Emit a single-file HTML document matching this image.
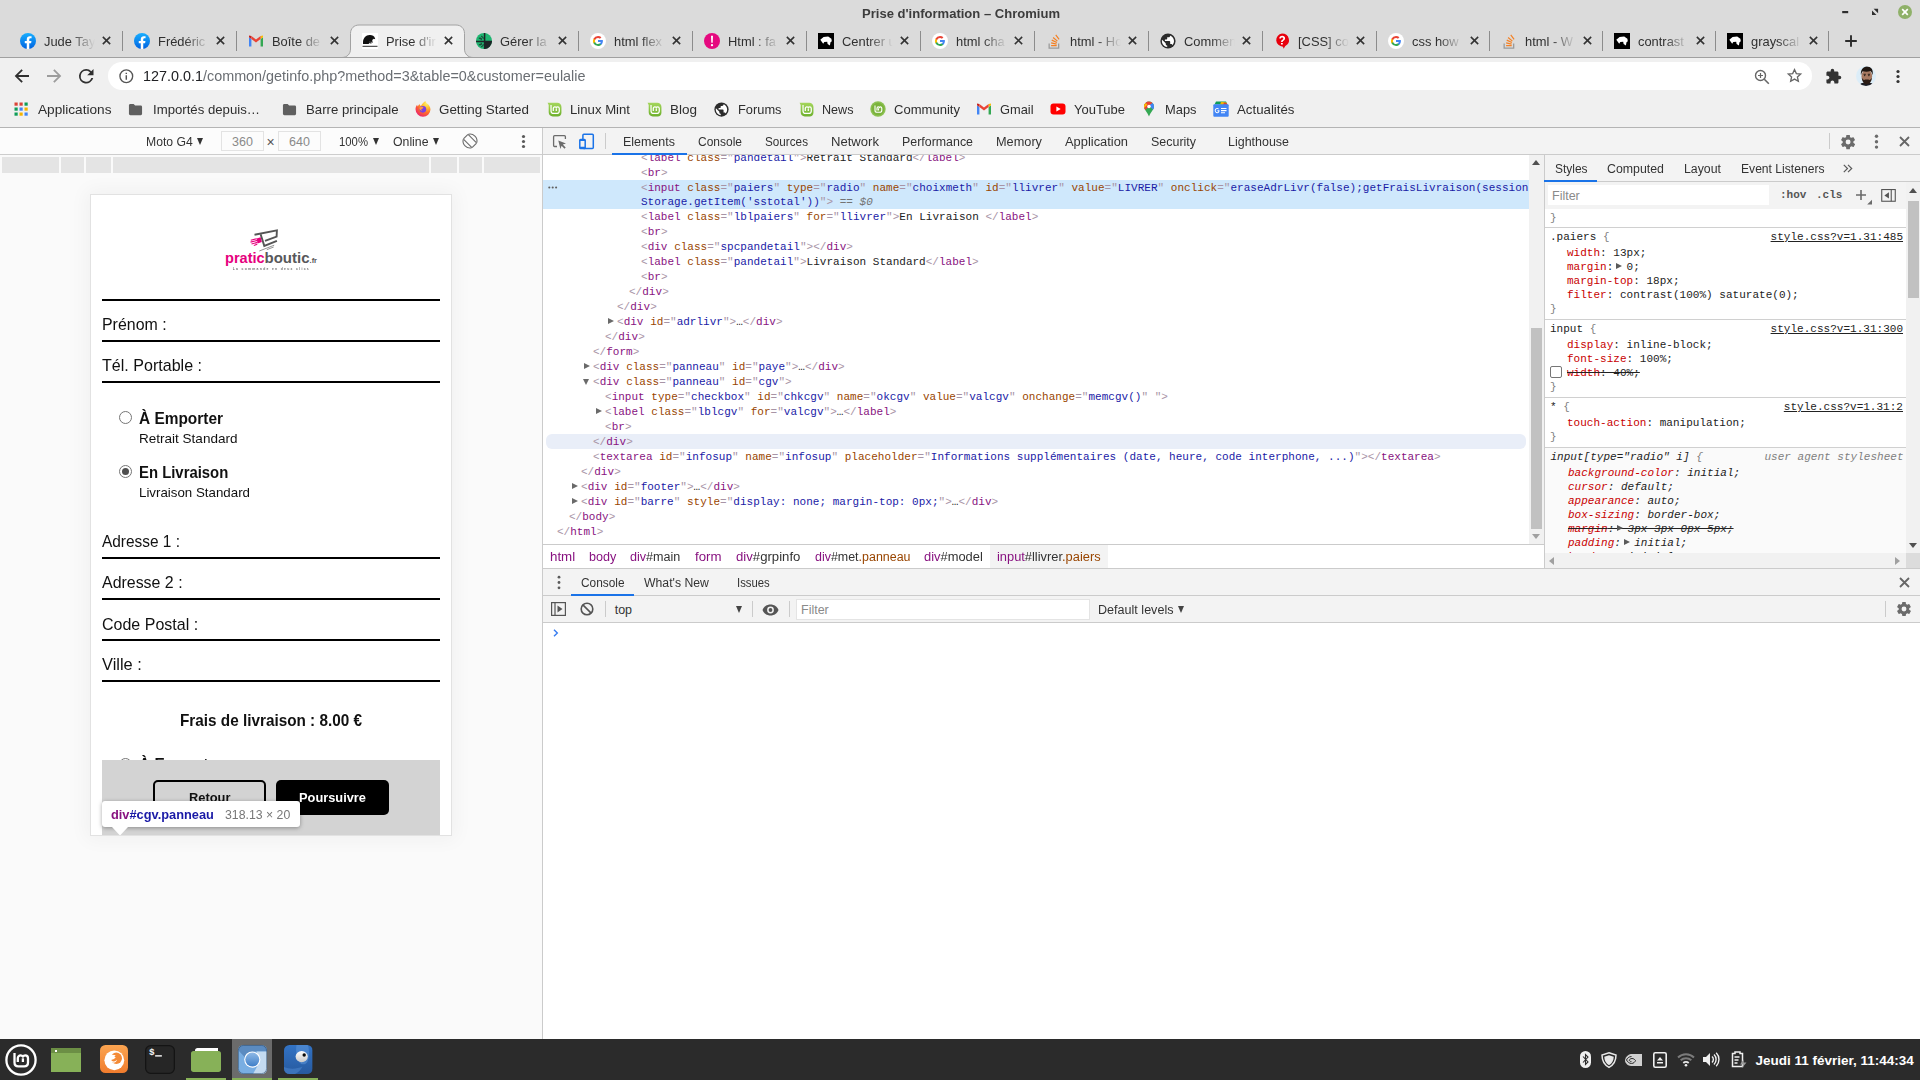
<!DOCTYPE html>
<html lang="fr">
<head>
<meta charset="utf-8">
<title>Prise d'information – Chromium</title>
<style>
*{box-sizing:border-box;margin:0;padding:0}
html,body{width:1920px;height:1080px;overflow:hidden;background:#fff}
body{font-family:"Liberation Sans",sans-serif;font-size:13px;color:#303030;position:relative}
.abs{position:absolute}
.t{position:absolute;white-space:nowrap;line-height:1}
svg{position:absolute;overflow:visible}
/* ---------- window chrome ---------- */
#titlebar{position:absolute;left:0;top:0;width:1920px;height:58px;background:#dbdbdb}
#title{position:absolute;white-space:nowrap;font-weight:bold;color:#3c3c3c;line-height:1}
#tabline{position:absolute;left:0;top:57px;width:1920px;height:1px;background:#a0a0a0}
#toolbar{position:absolute;left:0;top:58px;width:1920px;height:69px;background:#f0f0f0}
#chromeborder{position:absolute;left:0;top:127px;width:1920px;height:1px;background:#b4b4b4}
.tab{position:absolute;top:25px;height:33px;width:114px}
.tab .tt{position:absolute;left:36px;top:7px;height:20px;width:51px;overflow:hidden;-webkit-mask-image:linear-gradient(90deg,#000 52%,transparent 100%);mask-image:linear-gradient(90deg,#000 52%,transparent 100%)}
.tab .tti{position:absolute;left:0;top:2.900px;font-size:13.400px;line-height:1;color:#303030;white-space:nowrap;transform-origin:0 50%;transform:scaleX(.963)}
.tab .sep{position:absolute;left:113px;top:6px;width:1px;height:20px;background:#8c8c8c}
.tab .x{position:absolute;left:92.500px;top:10px;width:11px;height:11px}
.tab .fav{position:absolute;left:12px;top:8px;width:16px;height:16px}
#omni{position:absolute;left:108px;top:62px;width:1704px;height:28px;border-radius:14px;background:#fff}
.bm{position:absolute;line-height:1;color:#2e2e2e;white-space:nowrap}
/* ---------- taskbar ---------- */
#taskbar{position:absolute;left:0;top:1039px;width:1920px;height:41px;background:#2b2b2b}
</style>
</head>
<body>
<!-- ======= TITLE BAR + TABS ======= -->
<div id="titlebar">
  <div id="title" style="transform-origin:0 50%;transform:scaleX(1.0030);left:861.500px;top:6.500px;font-size:13px">Prise d'information – Chromium</div>
  <div id="tabstrip">
<svg width="0" height="0" style="position:absolute"><defs><linearGradient id="fbg" x1="0" y1="0" x2="0" y2="1"><stop offset="0" stop-color="#19afff"/><stop offset="1" stop-color="#0062e0"/></linearGradient></defs></svg>
<div class="tab" style="left:8px"><svg class="fav" viewBox="0 0 16 16"><circle cx="8" cy="8" r="8" fill="url(#fbg)"/><path d="M11.1 10.3l.35-2.3H9.25V6.5c0-.63.3-1.25 1.3-1.25h1V3.3s-.9-.16-1.78-.16c-1.8 0-3 1.1-3 3.1V8h-2v2.3h2V16h2.48v-5.7z" fill="#fff"/></svg><span class="tt"><span class="tti">Jude Tay</span></span><svg class="x" viewBox="0 0 12 12"><path d="M2 2l8 8M10 2l-8 8" stroke="#333" stroke-width="1.700" fill="none"/></svg><span class="sep" style="left:114px"></span></div>
<div class="tab" style="left:122px"><svg class="fav" viewBox="0 0 16 16"><circle cx="8" cy="8" r="8" fill="url(#fbg)"/><path d="M11.1 10.3l.35-2.3H9.25V6.5c0-.63.3-1.25 1.3-1.25h1V3.3s-.9-.16-1.78-.16c-1.8 0-3 1.1-3 3.1V8h-2v2.3h2V16h2.48v-5.7z" fill="#fff"/></svg><span class="tt"><span class="tti">Frédéric</span></span><svg class="x" viewBox="0 0 12 12"><path d="M2 2l8 8M10 2l-8 8" stroke="#333" stroke-width="1.700" fill="none"/></svg><span class="sep" style="left:114px"></span></div>
<div class="tab" style="left:236px"><svg class="fav" viewBox="0 0 16 16"><path d="M1 13.5V4.2l2.4 1.8v7.5z" fill="#4285f4"/><path d="M12.6 13.5V6l2.4-1.8v9.3z" fill="#34a853"/><path d="M12.6 3.1l2.4-.6v1.7L12.6 6z" fill="#fbbc04"/><path d="M1 2.5l2.4.6V6L1 4.2z" fill="#c5221f"/><path d="M3.4 6V3.1L8 6.6l4.6-3.5V6L8 9.5z" fill="#ea4335"/></svg><span class="tt"><span class="tti">Boîte de</span></span><svg class="x" viewBox="0 0 12 12"><path d="M2 2l8 8M10 2l-8 8" stroke="#333" stroke-width="1.700" fill="none"/></svg></div>
<svg class="acttab" style="left:341px;top:24px" width="132" height="34" viewBox="0 0 132 34"><path d="M1 33.500 C6 33.500 9.500 30 9.500 25 V9.500 C9.500 4.500 13 1 18 1 H115 C120 1 123.5 4.500 123.5 9.500 V25 C123.5 30 127 33.500 132 33.500 V34 H0Z" fill="#f0f0f0" stroke="#a2a2a2" stroke-width="1"/><rect x="0" y="33" width="132" height="2" fill="#f0f0f0"/></svg>
<div class="tab" style="left:350px"><svg class="fav" viewBox="0 0 16 16"><rect width="16" height="16" fill="#fff"/><path d="M1 9.600C1 5 4 2.300 7.500 2.100c2.500-.2 4.800 1.100 5.500 3.100l.2 1-1.400-.5-1.600 1.200.5 3-1.500-1-.6 1.500-1-.3L6.500 11 1 11z" fill="#111"/><path d="M.5 13.300h15" stroke="#111" stroke-width=".9"/><path d="M7.600 8.400l1 2.200M9 8.300l.5 2.200" stroke="#666" stroke-width=".7"/></svg><span class="tt"><span class="tti">Prise d'ir</span></span><svg class="x" viewBox="0 0 12 12"><path d="M2 2l8 8M10 2l-8 8" stroke="#333" stroke-width="1.700" fill="none"/></svg></div>
<div class="tab" style="left:464px"><svg class="fav" viewBox="0 0 16 16"><circle cx="8" cy="8" r="8" fill="#1fb571"/><path d="M8.600 8.600H16A8 8 0 0 1 8.600 16z" fill="#1d2526"/><path d="M8.600 0v16M0 8.600h16" stroke="#1d2526" stroke-width="1.500" fill="none"/><path d="M2.800 5.200h2.400v2M2.800 11.800h2.400v-2M5.200 3.200c1.500.3 2 1.300 2 2.500M5.200 13.800c1.500-.3 2-1.300 2-2.500" stroke="#1d2526" stroke-width="1" fill="none"/></svg><span class="tt"><span class="tti">Gérer la</span></span><svg class="x" viewBox="0 0 12 12"><path d="M2 2l8 8M10 2l-8 8" stroke="#333" stroke-width="1.700" fill="none"/></svg><span class="sep" style="left:114px"></span></div>
<div class="tab" style="left:578px"><svg class="fav" viewBox="0 0 16 16"><circle cx="8" cy="8" r="8" fill="#fff"/><path d="M12.9 8.1c0-.36-.03-.7-.1-1.03H8v1.95h2.75a2.35 2.35 0 0 1-1.02 1.54v1.28h1.65c.97-.9 1.52-2.2 1.52-3.74z" fill="#4285f4"/><path d="M8 13.1c1.38 0 2.54-.46 3.38-1.24l-1.65-1.28c-.46.3-1.04.49-1.73.49-1.33 0-2.46-.9-2.86-2.1h-1.7v1.32A5.1 5.1 0 0 0 8 13.1z" fill="#34a853"/><path d="M5.14 8.97a3.06 3.06 0 0 1 0-1.95V5.7h-1.7a5.1 5.1 0 0 0 0 4.59z" fill="#fbbc05"/><path d="M8 4.93c.75 0 1.42.26 1.95.76l1.46-1.46A4.9 4.9 0 0 0 8 2.9 5.1 5.1 0 0 0 3.44 5.7l1.7 1.32c.4-1.2 1.53-2.1 2.86-2.1z" fill="#ea4335"/></svg><span class="tt"><span class="tti">html flex</span></span><svg class="x" viewBox="0 0 12 12"><path d="M2 2l8 8M10 2l-8 8" stroke="#333" stroke-width="1.700" fill="none"/></svg><span class="sep" style="left:114px"></span></div>
<div class="tab" style="left:692px"><svg class="fav" viewBox="0 0 16 16"><circle cx="8" cy="8" r="8" fill="#e5097f"/><path d="M7 2.800h2l-.3 7H7.300zM8 11a1.150 1.150 0 1 1 0 2.300A1.150 1.150 0 0 1 8 11z" fill="#fff"/></svg><span class="tt"><span class="tti">Html : fa</span></span><svg class="x" viewBox="0 0 12 12"><path d="M2 2l8 8M10 2l-8 8" stroke="#333" stroke-width="1.700" fill="none"/></svg><span class="sep" style="left:114px"></span></div>
<div class="tab" style="left:806px"><svg class="fav" viewBox="0 0 16 16"><rect width="16" height="16" fill="#000"/><path d="M2.300 6.800L5.600 4l4.600-.6 3.200 2.400.4 2.500-1.300 1-.6 3.200-2.300-1.600-.4-2.200-2.900.3-1.100 1.700z" fill="#fff"/></svg><span class="tt"><span class="tti">Centrer u</span></span><svg class="x" viewBox="0 0 12 12"><path d="M2 2l8 8M10 2l-8 8" stroke="#333" stroke-width="1.700" fill="none"/></svg><span class="sep" style="left:114px"></span></div>
<div class="tab" style="left:920px"><svg class="fav" viewBox="0 0 16 16"><circle cx="8" cy="8" r="8" fill="#fff"/><path d="M12.9 8.1c0-.36-.03-.7-.1-1.03H8v1.95h2.75a2.35 2.35 0 0 1-1.02 1.54v1.28h1.65c.97-.9 1.52-2.2 1.52-3.74z" fill="#4285f4"/><path d="M8 13.1c1.38 0 2.54-.46 3.38-1.24l-1.65-1.28c-.46.3-1.04.49-1.73.49-1.33 0-2.46-.9-2.86-2.1h-1.7v1.32A5.1 5.1 0 0 0 8 13.1z" fill="#34a853"/><path d="M5.14 8.97a3.06 3.06 0 0 1 0-1.95V5.7h-1.7a5.1 5.1 0 0 0 0 4.59z" fill="#fbbc05"/><path d="M8 4.93c.75 0 1.42.26 1.95.76l1.46-1.46A4.9 4.9 0 0 0 8 2.9 5.1 5.1 0 0 0 3.44 5.7l1.7 1.32c.4-1.2 1.53-2.1 2.86-2.1z" fill="#ea4335"/></svg><span class="tt"><span class="tti">html cha</span></span><svg class="x" viewBox="0 0 12 12"><path d="M2 2l8 8M10 2l-8 8" stroke="#333" stroke-width="1.700" fill="none"/></svg><span class="sep" style="left:114px"></span></div>
<div class="tab" style="left:1034px"><svg class="fav" viewBox="0 0 16 16"><path d="M12 14.5V10.6h1.3v5.2H2.5v-5.2h1.3v3.9z" fill="#9b9b9b"/><path d="M5.1 12h5.6v1.2H5.1zM5.25 9.3l5.5 1.15-.25 1.2L5 10.5zM6 6.6l5.1 2.4-.5 1.1-5.1-2.4zM7.5 4.1l4.3 3.6-.8.9-4.3-3.6zM10.2 1.6l3.4 4.5-1 .7-3.3-4.5z" fill="#f48024"/></svg><span class="tt"><span class="tti">html - Ho</span></span><svg class="x" viewBox="0 0 12 12"><path d="M2 2l8 8M10 2l-8 8" stroke="#333" stroke-width="1.700" fill="none"/></svg><span class="sep" style="left:114px"></span></div>
<div class="tab" style="left:1148px"><svg class="fav" viewBox="0 0 16 16"><circle cx="8" cy="8" r="7.6" fill="#2b2b2b"/><path d="M7.2 14.1c-3-.4-5.3-2.9-5.3-6.100 0-.5.06-.9.16-1.3L5.700 10.300v.8c0 .8.7 1.500 1.500 1.500zm5.300-1.900c-.2-.6-.8-1.100-1.500-1.100h-.8V8.800c0-.4-.3-.8-.8-.8H4.900V6.500h1.500c.4 0 .8-.3.8-.8V4.200h1.500c.8 0 1.500-.7 1.500-1.500v-.3c2.200.9 3.800 3.100 3.800 5.600 0 1.600-.6 3.100-1.600 4.200z" fill="#fff"/></svg><span class="tt"><span class="tti">Commen</span></span><svg class="x" viewBox="0 0 12 12"><path d="M2 2l8 8M10 2l-8 8" stroke="#333" stroke-width="1.700" fill="none"/></svg><span class="sep" style="left:114px"></span></div>
<div class="tab" style="left:1262px"><svg class="fav" viewBox="0 0 16 16"><path d="M8 .6a7 6.600 0 0 1 3.300 12.400L9.600 15.800 9 13.700A7 6.600 0 0 1 8 .6z" fill="#e8000d"/><path d="M5.300 5.500c0-1.600 1.200-2.700 2.900-2.700s2.900 1 2.900 2.500c0 1.300-.8 1.900-1.600 2.400-.6.400-.8.700-.8 1.400H7.100c0-1.100.3-1.700 1.200-2.300.7-.5 1-.8 1-1.400 0-.6-.5-1-1.200-1s-1.200.500-1.200 1.100zM7 9.900h1.800v1.700H7z" fill="#fff"/></svg><span class="tt"><span class="tti">[CSS] cou</span></span><svg class="x" viewBox="0 0 12 12"><path d="M2 2l8 8M10 2l-8 8" stroke="#333" stroke-width="1.700" fill="none"/></svg><span class="sep" style="left:114px"></span></div>
<div class="tab" style="left:1376px"><svg class="fav" viewBox="0 0 16 16"><circle cx="8" cy="8" r="8" fill="#fff"/><path d="M12.9 8.1c0-.36-.03-.7-.1-1.03H8v1.95h2.75a2.35 2.35 0 0 1-1.02 1.54v1.28h1.65c.97-.9 1.52-2.2 1.52-3.74z" fill="#4285f4"/><path d="M8 13.1c1.38 0 2.54-.46 3.38-1.24l-1.65-1.28c-.46.3-1.04.49-1.73.49-1.33 0-2.46-.9-2.86-2.1h-1.7v1.32A5.1 5.1 0 0 0 8 13.1z" fill="#34a853"/><path d="M5.14 8.97a3.06 3.06 0 0 1 0-1.95V5.7h-1.7a5.1 5.1 0 0 0 0 4.59z" fill="#fbbc05"/><path d="M8 4.93c.75 0 1.42.26 1.95.76l1.46-1.46A4.9 4.9 0 0 0 8 2.9 5.1 5.1 0 0 0 3.44 5.7l1.7 1.32c.4-1.2 1.53-2.1 2.86-2.1z" fill="#ea4335"/></svg><span class="tt"><span class="tti">css how</span></span><svg class="x" viewBox="0 0 12 12"><path d="M2 2l8 8M10 2l-8 8" stroke="#333" stroke-width="1.700" fill="none"/></svg><span class="sep" style="left:113px"></span></div>
<div class="tab" style="left:1489px"><svg class="fav" viewBox="0 0 16 16"><path d="M12 14.5V10.6h1.3v5.2H2.5v-5.2h1.3v3.9z" fill="#9b9b9b"/><path d="M5.1 12h5.6v1.2H5.1zM5.25 9.3l5.5 1.15-.25 1.2L5 10.5zM6 6.6l5.1 2.4-.5 1.1-5.1-2.4zM7.5 4.1l4.3 3.6-.8.9-4.3-3.6zM10.2 1.6l3.4 4.5-1 .7-3.3-4.5z" fill="#f48024"/></svg><span class="tt"><span class="tti">html - W</span></span><svg class="x" viewBox="0 0 12 12"><path d="M2 2l8 8M10 2l-8 8" stroke="#333" stroke-width="1.700" fill="none"/></svg><span class="sep" style="left:113px"></span></div>
<div class="tab" style="left:1602px"><svg class="fav" viewBox="0 0 16 16"><rect width="16" height="16" fill="#000"/><path d="M2.300 6.800L5.600 4l4.600-.6 3.200 2.400.4 2.500-1.300 1-.6 3.200-2.300-1.600-.4-2.200-2.900.3-1.100 1.700z" fill="#fff"/></svg><span class="tt"><span class="tti">contrast</span></span><svg class="x" viewBox="0 0 12 12"><path d="M2 2l8 8M10 2l-8 8" stroke="#333" stroke-width="1.700" fill="none"/></svg><span class="sep" style="left:113px"></span></div>
<div class="tab" style="left:1715px"><svg class="fav" viewBox="0 0 16 16"><rect width="16" height="16" fill="#000"/><path d="M2.300 6.800L5.600 4l4.600-.6 3.200 2.400.4 2.500-1.300 1-.6 3.200-2.300-1.600-.4-2.200-2.900.3-1.100 1.700z" fill="#fff"/></svg><span class="tt"><span class="tti">grayscal</span></span><svg class="x" viewBox="0 0 12 12"><path d="M2 2l8 8M10 2l-8 8" stroke="#333" stroke-width="1.700" fill="none"/></svg><span class="sep" style="left:113px"></span></div>
<svg style="left:1844px;top:33.700px" width="14" height="14" viewBox="0 0 14 14"><path d="M7 1.200v11.600M1.200 7h11.600" stroke="#2b2b2b" stroke-width="1.900" fill="none"/></svg>
<svg style="left:1839px;top:5px" width="14" height="14" viewBox="0 0 14 14"><path d="M3.200 7.100h6" stroke="#2e2e2e" stroke-width="2.200"/></svg>
<svg style="left:1868px;top:5px" width="14" height="14" viewBox="0 0 14 14"><path d="M5.600 3.800h4.500v4.500zM4 5.400v4.500h4.500z" fill="#2e2e2e"/></svg>
<svg style="left:1897px;top:4px" width="16" height="16" viewBox="0 0 16 16"><circle cx="8" cy="8" r="7" fill="#8fb169"/><path d="M5.200 5.200l5.600 5.600M10.800 5.200l-5.600 5.600" stroke="#fff" stroke-width="1.700"/></svg>
</div>
  <div id="tabline"></div>
</div>
<!-- ======= TOOLBAR + BOOKMARKS ======= -->
<div id="toolbar"></div>
<div id="omni"></div>
<div id="tbitems">
<svg style="left:14px;top:68px" width="16" height="16" viewBox="0 0 16 16"><path d="M15 7.100H4.200l4.600-4.600L7.500 1.200.7 8l6.800 6.800 1.300-1.300-4.600-4.600H15z" fill="#2f2f2f"/></svg>
<svg style="left:46px;top:68px" width="16" height="16" viewBox="0 0 16 16"><path d="M1 7.100h10.800L7.200 2.500l1.300-1.300L15.300 8l-6.800 6.800-1.300-1.300 4.600-4.600H1z" fill="#9c9c9c"/></svg>
<svg style="left:79px;top:69px" width="14.500" height="14.500" viewBox="0 0 16 16"><path d="M13.600 2.400A7.900 7.900 0 0 0 8 0a8 8 0 1 0 7.700 10h-2.100A6 6 0 1 1 8 2c1.700 0 3.100.7 4.200 1.800L9 7h7V0z" fill="#2f2f2f"/></svg>
<svg style="left:118.700px;top:68.700px" width="14.600" height="14.600" viewBox="0 0 14 14"><circle cx="7" cy="7" r="6.100" fill="none" stroke="#555" stroke-width="1.300"/><path d="M6.300 6h1.400v4.300H6.300zM6.300 3.500h1.400v1.400H6.300z" fill="#555"/></svg>
<div class="t" id="url" style="transform-origin:0 50%;transform:scaleX(1.0136);left:143.0px;top:69px;font-size:14.2px;color:#202124">127.0.0.1<span style="color:#6a6e73">/common/getinfo.php?method=3&amp;table=0&amp;customer=eulalie</span></div>
<svg style="left:1754px;top:68.500px" width="16" height="16" viewBox="0 0 16 16"><circle cx="6.500" cy="6.500" r="5" fill="none" stroke="#666" stroke-width="1.400"/><path d="M10.300 10.300l4.500 4.500" stroke="#666" stroke-width="1.600"/><path d="M4 6.500h5M6.500 4v5" stroke="#666" stroke-width="1.200"/></svg>
<svg style="left:1786.500px;top:68.300px" width="15" height="15" viewBox="0 0 16 16"><path d="M8 1.600l1.950 4.300 4.650.5-3.500 3.150 1 4.600L8 11.800l-4.100 2.350 1-4.600L1.400 6.400l4.650-.5z" fill="none" stroke="#666" stroke-width="1.400" stroke-linejoin="miter"/></svg>
<svg style="left:1825px;top:68px" width="17" height="17" viewBox="0 0 24 24"><path d="M20.500 11H19V7c0-1.100-.9-2-2-2h-4V3.500a2.500 2.500 0 0 0-5 0V5H4c-1.100 0-2 .9-2 2v3.800h1.500c1.500 0 2.700 1.200 2.700 2.700S5 16.200 3.500 16.200H2V20c0 1.100.9 2 2 2h3.800v-1.500c0-1.500 1.200-2.700 2.700-2.700s2.700 1.200 2.700 2.700V22H17c1.100 0 2-.9 2-2v-4h1.500a2.500 2.500 0 0 0 0-5z" fill="#333"/></svg>
<svg style="left:1856px;top:66px" width="20" height="20" viewBox="0 0 20 20"><defs><clipPath id="avc"><circle cx="10" cy="10" r="10"/></clipPath></defs><g clip-path="url(#avc)"><rect width="20" height="20" fill="#dcedf8"/><path d="M3 20c.5-2.500 3-3.500 7.500-3.500s7 1 7.500 3.500z" fill="#1c1c22"/><ellipse cx="10.800" cy="10.200" rx="5.300" ry="6.800" fill="#a87a62"/><path d="M5 9.500C4.300 4 7 .3 11.300.5c4.200.2 6.200 3.500 5.300 9-.3-2.300-1-3.700-2.300-4.500-2 .8-5 .8-7.500.3C5.800 6.300 5.300 7.800 5 9.500z" fill="#1f1611"/><path d="M5.800 11.500c.3 4.500 2.300 6.700 5 6.700s4.700-2.200 5.100-6.700c-.8 1.800-1.500 2.300-2.600 2.500-.8-.6-4.200-.6-5 0-1.100-.3-1.800-.900-2.500-2.500z" fill="#2a1b14"/><path d="M7.600 8.300h2.200M11.800 8.300H14" stroke="#1f1611" stroke-width=".9"/><circle cx="8.700" cy="9.600" r=".7" fill="#1a1210"/><circle cx="12.900" cy="9.600" r=".7" fill="#1a1210"/></g></svg>
<svg style="left:1895px;top:68px" width="6" height="17" viewBox="0 0 6 17"><circle cx="3" cy="3.500" r="1.600" fill="#333"/><circle cx="3" cy="8.500" r="1.600" fill="#333"/><circle cx="3" cy="13.500" r="1.600" fill="#333"/></svg>
<svg style="left:14px;top:102px" width="14" height="14" viewBox="0 0 14 14"><rect x="0.5" y="0.5" width="3.200" height="3.200" fill="#db4437"/><rect x="5.5" y="0.5" width="3.200" height="3.200" fill="#db4437"/><rect x="10.5" y="0.5" width="3.200" height="3.200" fill="#0f9d58"/><rect x="0.5" y="5.5" width="3.200" height="3.200" fill="#0f9d58"/><rect x="5.5" y="5.5" width="3.200" height="3.200" fill="#4285f4"/><rect x="10.5" y="5.5" width="3.200" height="3.200" fill="#f4b400"/><rect x="0.5" y="10.5" width="3.200" height="3.200" fill="#0f9d58"/><rect x="5.5" y="10.5" width="3.200" height="3.200" fill="#f4b400"/><rect x="10.5" y="10.5" width="3.200" height="3.200" fill="#4285f4"/></svg>
<div class="bm" style="transform-origin:0 50%;transform:scaleX(1.0484);left:38.0px;top:103px;font-size:13px;">Applications</div>
<svg style="left:128px;top:102px" width="15" height="15" viewBox="0 0 16 14"><path d="M1 2.500C1 1.700 1.700 1 2.500 1H6l1.600 1.700h6c.8 0 1.400.7 1.400 1.500v7.300c0 .8-.6 1.500-1.400 1.500h-11C1.700 13 1 12.300 1 11.500z" fill="#5f5f5f"/></svg>
<div class="bm" style="transform-origin:0 50%;transform:scaleX(1.0142);left:152.5px;top:103px;font-size:13px;">Importés depuis…</div>
<svg style="left:282px;top:102px" width="15" height="15" viewBox="0 0 16 14"><path d="M1 2.500C1 1.700 1.700 1 2.500 1H6l1.600 1.700h6c.8 0 1.400.7 1.400 1.500v7.300c0 .8-.6 1.500-1.400 1.500h-11C1.700 13 1 12.300 1 11.500z" fill="#5f5f5f"/></svg>
<div class="bm" style="transform-origin:0 50%;transform:scaleX(1.0160);left:306.0px;top:103px;font-size:13px;">Barre principale</div>
<svg style="left:415px;top:100.5px" width="16" height="16" viewBox="0 0 16 16.500"><defs><radialGradient id="ffr" cx="0.75" cy="0.15" r="1"><stop offset="0" stop-color="#fff36b"/><stop offset=".3" stop-color="#ffbd2e"/><stop offset=".6" stop-color="#ff6a2b"/><stop offset="1" stop-color="#e6147a"/></radialGradient></defs><path d="M8.300 1.700C9.300.9 9.900.3 10.300 0c.5 1.300 1.300 2 2.200 2.800 1.700 1.400 3.200 3.300 3.200 6A7.700 7.700 0 0 1 8 16.300 7.700 7.700 0 0 1 .3 8.600C.3 6.500 1 5 1.900 3.900c.1.900.4 1.500.9 1.900.3-1.200 1-2 1.800-2.400.1.800.5 1.400 1.200 1.700.7-1.300 1.600-2.500 2.500-3.400z" fill="url(#ffr)"/><circle cx="7.900" cy="8.600" r="3.400" fill="#7a3fe0"/><path d="M5 6.400c.8-.6 1.900-.7 2.800-.2.600.3.700.9.300 1.300-.5.500-1.500.4-1.800 1.100-.2.600.4 1.100 1.200 1.300-1.700.4-3.200-.8-3.200-2.300 0-.5.300-.9.700-1.200z" fill="#ff9a3c"/></svg>
<div class="bm" style="transform-origin:0 50%;transform:scaleX(1.0291);left:439.0px;top:103px;font-size:13px;">Getting Started</div>
<svg style="left:546.5px;top:101.5px" width="15" height="15" viewBox="0 0 16 16"><defs><linearGradient id="mg" x1="0" y1="0" x2="0" y2="1"><stop offset="0" stop-color="#a5d65c"/><stop offset="1" stop-color="#6db02d"/></linearGradient></defs><path d="M.6.8h10.400c2.600 0 4.400 1.800 4.400 4.400v6.200c0 2.300-1.700 4-4 4H6.200c-2.600 0-4.400-1.800-4.400-4.400V3.200z" fill="url(#mg)"/><path d="M4.300 3.200v6.300c0 1.700 1 2.700 2.700 2.700h3.400c1.700 0 2.700-1 2.700-2.700V7c0-1.100-.7-1.900-1.700-1.900-.7 0-1.200.3-1.500.8-.3-.5-.8-.8-1.500-.8-1 0-1.700.8-1.700 1.900v2.700" fill="none" stroke="#fff" stroke-width="1.300"/><path d="M9.900 9.700V6.800" stroke="#fff" stroke-width="1.300"/></svg>
<div class="bm" style="transform-origin:0 50%;transform:scaleX(1.0127);left:570.0px;top:103px;font-size:13px;">Linux Mint</div>
<svg style="left:646.5px;top:101.5px" width="15" height="15" viewBox="0 0 16 16"><defs><linearGradient id="mg" x1="0" y1="0" x2="0" y2="1"><stop offset="0" stop-color="#a5d65c"/><stop offset="1" stop-color="#6db02d"/></linearGradient></defs><path d="M.6.8h10.400c2.600 0 4.400 1.800 4.400 4.400v6.200c0 2.300-1.700 4-4 4H6.200c-2.600 0-4.400-1.800-4.400-4.400V3.200z" fill="url(#mg)"/><path d="M4.300 3.200v6.300c0 1.700 1 2.700 2.700 2.700h3.400c1.700 0 2.700-1 2.700-2.700V7c0-1.100-.7-1.900-1.700-1.900-.7 0-1.200.3-1.500.8-.3-.5-.8-.8-1.500-.8-1 0-1.700.8-1.700 1.900v2.700" fill="none" stroke="#fff" stroke-width="1.300"/><path d="M9.900 9.700V6.800" stroke="#fff" stroke-width="1.300"/></svg>
<div class="bm" style="transform-origin:0 50%;transform:scaleX(1.0372);left:670.0px;top:103px;font-size:13px;">Blog</div>
<svg style="left:714px;top:102px" width="15" height="15" viewBox="0 0 16 16"><circle cx="8" cy="8" r="7.6" fill="#2b2b2b"/><path d="M7.2 14.1c-3-.4-5.3-2.9-5.3-6.100 0-.5.06-.9.16-1.3L5.700 10.300v.8c0 .8.7 1.500 1.500 1.500zm5.300-1.900c-.2-.6-.8-1.100-1.500-1.100h-.8V8.800c0-.4-.3-.8-.8-.8H4.900V6.500h1.500c.4 0 .8-.3.8-.8V4.200h1.500c.8 0 1.500-.7 1.500-1.500v-.3c2.200.9 3.800 3.100 3.800 5.600 0 1.600-.6 3.100-1.600 4.200z" fill="#fff"/></svg>
<div class="bm" style="transform-origin:0 50%;transform:scaleX(0.9872);left:738.0px;top:103px;font-size:13px;">Forums</div>
<svg style="left:798.5px;top:101.5px" width="15" height="15" viewBox="0 0 16 16"><defs><linearGradient id="mg" x1="0" y1="0" x2="0" y2="1"><stop offset="0" stop-color="#a5d65c"/><stop offset="1" stop-color="#6db02d"/></linearGradient></defs><path d="M.6.8h10.400c2.600 0 4.400 1.800 4.400 4.400v6.200c0 2.300-1.700 4-4 4H6.200c-2.600 0-4.400-1.800-4.400-4.400V3.200z" fill="url(#mg)"/><path d="M4.300 3.200v6.300c0 1.700 1 2.700 2.700 2.700h3.400c1.700 0 2.700-1 2.700-2.700V7c0-1.100-.7-1.900-1.700-1.900-.7 0-1.200.3-1.500.8-.3-.5-.8-.8-1.500-.8-1 0-1.700.8-1.700 1.900v2.700" fill="none" stroke="#fff" stroke-width="1.300"/><path d="M9.900 9.700V6.800" stroke="#fff" stroke-width="1.300"/></svg>
<div class="bm" style="transform-origin:0 50%;transform:scaleX(0.9688);left:822.0px;top:103px;font-size:13px;">News</div>
<svg style="left:870px;top:101px" width="16" height="16" viewBox="0 0 16 16"><circle cx="8" cy="8" r="7.700" fill="#8cc152"/><circle cx="8" cy="8" r="6.300" fill="#7bb33c"/><path d="M5 4.400v4.800c0 1.300.8 2.100 2.100 2.100h2.600c1.300 0 2.100-.8 2.100-2.100V7.400c0-.9-.5-1.500-1.300-1.500-.5 0-.9.200-1.100.6-.3-.4-.6-.6-1.100-.6-.8 0-1.300.6-1.300 1.500v2" fill="none" stroke="#fff" stroke-width="1.100"/><path d="M8.400 9.400V7.200" stroke="#fff" stroke-width="1.100"/></svg>
<div class="bm" style="transform-origin:0 50%;transform:scaleX(1.0038);left:894.0px;top:103px;font-size:13px;">Community</div>
<svg style="left:976px;top:101px" width="16" height="16" viewBox="0 0 16 16"><path d="M1 13.5V4.2l2.4 1.8v7.5z" fill="#4285f4"/><path d="M12.6 13.5V6l2.4-1.8v9.3z" fill="#34a853"/><path d="M12.6 3.1l2.4-.6v1.7L12.6 6z" fill="#fbbc04"/><path d="M1 2.5l2.4.6V6L1 4.2z" fill="#c5221f"/><path d="M3.4 6V3.1L8 6.6l4.6-3.5V6L8 9.5z" fill="#ea4335"/></svg>
<div class="bm" style="transform-origin:0 50%;transform:scaleX(0.9867);left:1000.0px;top:103px;font-size:13px;">Gmail</div>
<svg style="left:1050px;top:101px" width="16" height="16" viewBox="0 0 16 16"><rect x=".5" y="2.500" width="15" height="11" rx="3" fill="#f00"/><path d="M6.400 5.400l4.300 2.600-4.300 2.600z" fill="#fff"/></svg>
<div class="bm" style="transform-origin:0 50%;transform:scaleX(0.9982);left:1074.0px;top:103px;font-size:13px;">YouTube</div>
<svg style="left:1141px;top:101px" width="16" height="16" viewBox="0 0 16 16"><path d="M8 .5a5 5 0 0 1 5 5c0 3-3 5-5 10C6 10.500 3 8.500 3 5.500a5 5 0 0 1 5-5z" fill="#34a853"/><path d="M8 .5a5 5 0 0 1 3.600 1.500L4.200 9C3.500 8 3 6.800 3 5.500a5 5 0 0 1 5-5z" fill="#ea4335"/><path d="M11.600 2A5 5 0 0 1 13 5.500c0 1.200-.4 2.200-1 3.200L8 4.500z" fill="#4285f4"/><path d="M4.200 9l3.800-4.500 4 4.200c-1.200 2-3 3.800-4 6.800-1-3-2.700-4.600-3.800-6.500z" fill="#fbbc04" opacity=".0"/><path d="M4.500 2A5 5 0 0 0 3 5.500c0 .5.100 1 .2 1.500L6.500 3.500z" fill="#fbbc04"/><circle cx="8" cy="5.500" r="1.800" fill="#fff"/></svg>
<div class="bm" style="transform-origin:0 50%;transform:scaleX(0.9907);left:1165.0px;top:103px;font-size:13px;">Maps</div>
<svg style="left:1213px;top:101px" width="16" height="16" viewBox="0 0 16 16"><path d="M3 .5h10l1.500 3H1.500z" fill="#0f9d58"/><path d="M8 .8l5.300.6 1.200 2.600H7z" fill="#f4b400"/><path d="M11 1.600l2.800.6.900 2H10z" fill="#db4437"/><rect x=".3" y="3.300" width="15.400" height="12.400" rx="1" fill="#4285f4"/><path d="M6.300 9.200H4.400v1h1c-.1.600-.6 1-1.200 1-.8 0-1.500-.7-1.500-1.600s.7-1.600 1.500-1.600c.4 0 .7.100 1 .4l.7-.7c-.4-.4-1-.7-1.700-.7-1.400 0-2.500 1.100-2.500 2.600s1.100 2.600 2.500 2.600c1.400 0 2.300-1 2.300-2.400 0-.2 0-.4-.2-.6z" fill="#fff"/><path d="M8 7.500h5.500M8 9.600h5.500M8 11.700h4" stroke="#fff" stroke-width="1.100"/></svg>
<div class="bm" style="transform-origin:0 50%;transform:scaleX(1.0200);left:1237.0px;top:103px;font-size:13px;">Actualités</div>
</div>
<div id="chromeborder"></div>
<!-- ======= LEFT (DEVICE EMULATION) ======= -->
<div id="left">
<style>
#left{position:absolute;left:0;top:128px;width:542px;height:911px;background:#fafafa;overflow:hidden}
#devtb{position:absolute;left:0;top:0;width:542px;height:27px;background:#fcfcfc;border-bottom:1px solid #cdcdcd}
#devtb .t{font-size:12.5px;color:#333;top:8px}
#devtb .box{position:absolute;top:3px;height:20px;width:43px;border:1px solid #e3e3e3;background:#fcfcfc;color:#8a8a8a;font-size:12.500px;text-align:center;line-height:20px}
#mq{position:absolute;left:2px;top:29px;width:538px;height:16px;background:#e4e4e4}
#mq i{position:absolute;top:0;width:2px;height:16px;background:#fafafa}
#frame{position:absolute;left:90px;top:66px;width:362px;height:642px;border:1px solid #e2e2e2;background:#fff;box-shadow:0 0 18px 4px rgba(0,0,0,.04);overflow:hidden}
#pg{position:absolute;left:-91px;top:-195px;width:542px;height:911px;color:#111}
#pg .ln{position:absolute;left:102px;width:338px;height:2px;background:#000}
#pg .lb{position:absolute;left:102px;font-size:16.5px;line-height:20px;white-space:nowrap;color:#111}
#pg .big{position:absolute;left:138.500px;font-size:16.500px;font-weight:bold;line-height:20px;white-space:nowrap;color:#111}
#pg .sm{position:absolute;left:138.500px;font-size:13px;line-height:16px;white-space:nowrap;color:#111}
#pg .rad{position:absolute;left:119px;width:13px;height:13px;border-radius:50%;border:1px solid #767676;background:#fff}
#pg .rad.on::after{content:"";position:absolute;left:2px;top:2px;width:7px;height:7px;border-radius:50%;background:#4f4f4f}
#foot{position:absolute;left:102px;top:760px;width:338px;height:76px;background:#d3d3d3}
.btn{position:absolute;top:780px;height:35px;border-radius:5px;font-weight:bold;font-size:13.500px;text-align:center;line-height:35px}
#tip{position:absolute;left:102px;top:801px;width:198px;height:26px;background:#fff;border-radius:3px;box-shadow:0 1px 4px rgba(0,0,0,.35)}
</style>
<div id="devtb">
  <div class="t" style="transform-origin:0 50%;transform:scaleX(0.9742);left:145.500px">Moto G4</div>
  <div class="abs" style="left:196.8px;top:10px;width:0;height:0;border-top:7px solid #333;border-left:3.700px solid transparent;border-right:3.700px solid transparent"></div>
  <div class="box" style="left:221px">360</div>
  <div class="t" style="left:266.500px;top:7px;font-size:14px;color:#555">×</div>
  <div class="box" style="left:278px">640</div>
  <div class="t" style="transform-origin:0 50%;transform:scaleX(0.9067);left:338.500px">100%</div>
  <div class="abs" style="left:372.8px;top:10px;width:0;height:0;border-top:7px solid #333;border-left:3.700px solid transparent;border-right:3.700px solid transparent"></div>
  <div class="t" style="transform-origin:0 50%;transform:scaleX(0.9823);left:392.500px">Online</div>
  <div class="abs" style="left:432.9px;top:10px;width:0;height:0;border-top:7px solid #333;border-left:3.700px solid transparent;border-right:3.700px solid transparent"></div>
  <svg style="left:462px;top:5px" width="16" height="16" viewBox="0 0 16 16"><g fill="none" stroke="#6b6b6b" stroke-width="1.100"><path d="M6.400 1.200A7 7 0 0 1 14.800 9.600M9.600 14.800A7 7 0 0 1 1.200 6.400"/><rect x="4.700" y="1.900" width="6.600" height="12.200" rx=".8" transform="rotate(-45 8 8)"/></g></svg>
  <svg style="left:521px;top:6px" width="5" height="15" viewBox="0 0 5 15"><circle cx="2.500" cy="2.500" r="1.600" fill="#5a5a5a"/><circle cx="2.500" cy="7.500" r="1.600" fill="#5a5a5a"/><circle cx="2.500" cy="12.500" r="1.600" fill="#5a5a5a"/></svg>
</div>
<div id="mq"><i style="left:57px"></i><i style="left:82px"></i><i style="left:109px"></i><i style="left:427px"></i><i style="left:455px"></i><i style="left:480px"></i></div>

<div id="frame"><div id="pg">
<svg id="logo" style="left:224px;top:229px" width="94" height="43" viewBox="0 0 94 43">
<g fill="none" stroke="#555" stroke-width="1.900" stroke-linejoin="miter"><path d="M30.500 5.700L52.900 1.400l-.3 6.200-11.600 4.300"/><path d="M36.600 5.200l3.700 11.700 12.600-5" /></g>
<g fill="none" stroke="#777" stroke-width=".8"><path d="M35.300 22l14.900-5.800M42.800 20.700l6.900-2.700"/></g>
<path d="M32.700 9.400l3.900-1.100 1.200 4.600-4.200 1.600z" fill="#e6007e"/><path d="M26.800 11.200l6-1.500M26.500 13.100l7-1.700M27.500 15l6-1.600M29.800 16.400l3.500-1.100" stroke="#e6007e" stroke-width="1.100" fill="none"/>
<text x="1" y="34" font-family="Liberation Sans, sans-serif" font-weight="bold" font-size="14.700" textLength="39.600" lengthAdjust="spacingAndGlyphs" fill="#e6007e">pratic</text>
<text x="40.500" y="34" font-family="Liberation Sans, sans-serif" font-weight="bold" font-size="14.700" textLength="45" lengthAdjust="spacingAndGlyphs" fill="#58585a">boutic</text>
<text x="85.600" y="34" font-family="Liberation Sans, sans-serif" font-weight="bold" font-size="7.500" textLength="7.400" lengthAdjust="spacingAndGlyphs" fill="#58585a">.fr</text>
<text x="8.700" y="40.700" font-family="Liberation Sans, sans-serif" font-weight="bold" font-size="3.400" textLength="76" lengthAdjust="spacing" fill="#555" opacity=".85">La commande en deux clics</text>
</svg>
<div class="ln" style="top:299px"></div>
<div class="t" style="transform-origin:0 50%;transform:scaleX(0.9364);left:102.0px;top:316px;font-size:17px;color:#111;">Prénom :</div>
<div class="ln" style="top:340px"></div>
<div class="t" style="transform-origin:0 50%;transform:scaleX(0.9449);left:102.0px;top:357px;font-size:17px;color:#111;">Tél. Portable :</div>
<div class="ln" style="top:381px"></div>
<div class="rad" style="top:411px"></div>
<div class="t" style="transform-origin:0 50%;transform:scaleX(0.9296);left:138.7px;top:411px;font-size:16.6px;color:#111;font-weight:bold;">À Emporter</div>
<div class="t" style="transform-origin:0 50%;transform:scaleX(1.0019);left:138.5px;top:432px;font-size:13.5px;color:#111;">Retrait Standard</div>
<div class="rad on" style="top:465px"></div>
<div class="t" style="transform-origin:0 50%;transform:scaleX(0.8966);left:138.7px;top:465px;font-size:16.6px;color:#111;font-weight:bold;">En Livraison</div>
<div class="t" style="transform-origin:0 50%;transform:scaleX(0.9860);left:138.5px;top:486px;font-size:13.5px;color:#111;">Livraison Standard</div>
<div class="t" style="transform-origin:0 50%;transform:scaleX(0.9070);left:102.0px;top:533px;font-size:17px;color:#111;">Adresse 1 :</div>
<div class="ln" style="top:557px"></div>
<div class="t" style="transform-origin:0 50%;transform:scaleX(0.9372);left:102.0px;top:574px;font-size:17px;color:#111;">Adresse 2 :</div>
<div class="ln" style="top:598px"></div>
<div class="t" style="transform-origin:0 50%;transform:scaleX(0.9416);left:102.0px;top:616px;font-size:17px;color:#111;">Code Postal :</div>
<div class="ln" style="top:639px"></div>
<div class="t" style="transform-origin:0 50%;transform:scaleX(0.9645);left:102.0px;top:656px;font-size:17px;color:#111;">Ville :</div>
<div class="ln" style="top:680px"></div>
<div class="t" style="transform-origin:0 50%;transform:scaleX(0.9221);left:180.3px;top:713px;font-size:16.6px;color:#111;font-weight:bold;">Frais de livraison : 8.00 €</div>
<div class="rad" style="top:758px"></div>
<div class="t" style="transform-origin:0 50%;transform:scaleX(0.9296);left:138.7px;top:757px;font-size:16.6px;color:#111;font-weight:bold;">À Emporter</div>
<div id="foot"></div>
<div class="btn" style="left:153px;width:113px;border:2px solid #000;background:#d3d3d3"></div>
<div class="btn" style="left:276px;width:113px;background:#000"></div>
<div class="t" style="transform-origin:0 50%;transform:scaleX(0.9907);left:188.5px;top:791px;font-size:13px;font-weight:bold;color:#111;">Retour</div>
<div class="t" style="transform-origin:0 50%;transform:scaleX(0.9864);left:299.3px;top:791px;font-size:13px;font-weight:bold;color:#fff;">Poursuivre</div>
<div id="tip"></div>
<div class="t" style="transform-origin:0 50%;transform:scaleX(0.9557);left:111.4px;top:808px;font-size:13.4px;font-weight:bold;color:#1a1aa6;"><span style="color:#881280">div</span>#cgv.panneau</div>
<div class="t" style="transform-origin:0 50%;transform:scaleX(1.0087);left:225.2px;top:809px;font-size:12.2px;color:#777;">318.13 × 20</div>
<svg style="left:112px;top:826.500px" width="16" height="9" viewBox="0 0 16 9"><path d="M0 0h16L8 8.500z" fill="#fff"/></svg>
</div></div>
</div>
<!-- ======= DEVTOOLS ======= -->
<div id="devtools">
<style>
#devtools{position:absolute;left:542px;top:128px;width:1378px;height:911px;background:#fff;overflow:hidden;border-left:1px solid #cbcbcb}
#devtools .ui{font-size:12.500px;color:#333;top:8px}
#dtabs{position:absolute;left:0;top:0;width:1378px;height:27px;background:#f3f3f3;border-bottom:1px solid #cbcbcb}
#dtabs .t{font-size:12.500px;color:#333;top:8px}
.mono{font-family:"Liberation Mono",monospace;font-size:11px;letter-spacing:.02px;white-space:pre;position:absolute;line-height:14px;color:#222}
#el{position:absolute;left:0;top:27px;width:987px;height:390px;overflow:hidden;background:#fff}
#el .r{font-family:"Liberation Mono",monospace;font-size:11px;letter-spacing:.02px;white-space:pre;position:absolute;line-height:14px;height:14px;color:#222}
.p{color:#a894a6}.tg{color:#881280}.an{color:#994500}.av{color:#1a1aa6}.tx{color:#222}
.arr{position:absolute;width:0;height:0}
.ar{border-left:6px solid #6a6a6a;border-top:3.800px solid transparent;border-bottom:3.800px solid transparent}
.ad{border-top:6.200px solid #6a6a6a;border-left:3.600px solid transparent;border-right:3.600px solid transparent}
#st{position:absolute;left:1001px;top:27px;width:376px;height:414px;background:#fff;overflow:hidden}
#st .s{font-family:"Liberation Mono",monospace;font-size:11px;letter-spacing:.02px;white-space:pre;position:absolute;line-height:14px;height:14px;color:#222}
.pn{color:#c80000}.br{color:#808080}.lk{color:#5f5f5f;text-decoration:underline}
.sepl{position:absolute;left:0;width:362px;height:1px;background:#d0d0d0}
.sb{position:absolute;background:#f1f1f1}
.th{position:absolute;background:#c1c1c1}
.vsep{position:absolute;width:1px;height:16px;background:#cbcbcb}
</style>
<div id="dtabs">
<svg style="left:9px;top:6px" width="16" height="16" viewBox="0 0 16 16"><path d="M5 12.500H2.600c-.6 0-1-.4-1-1V2.700c0-.6.400-1 1-1h9.800c.6 0 1 .4 1 1V5" fill="none" stroke="#6b6b6b" stroke-width="1.300"/><path d="M6.300 6.400l7.700 3-3.200 1.200 2.900 2.900-1.200 1.200-2.900-2.900-1.200 3.200z" fill="#6b6b6b"/></svg>
<svg style="left:36px;top:4.500px" width="16" height="17" viewBox="0 0 16 17"><rect x="3.900" y="1.200" width="10.400" height="14.400" rx="1" fill="none" stroke="#1a73e8" stroke-width="1.500"/><rect x=".8" y="6.400" width="5.400" height="9.200" rx=".8" fill="#f3f3f3" stroke="#1a73e8" stroke-width="1.500"/><path d="M.8 7.200h5.400M.8 14.600h5.400" stroke="#1a73e8" stroke-width="1.600"/></svg>
<div class="vsep" style="left:62px;top:5px"></div>
<div class="t mt" style="transform-origin:0 50%;transform:scaleX(0.9979);left:80px">Elements</div>
<div class="t mt" style="transform-origin:0 50%;transform:scaleX(0.9591);left:155px">Console</div>
<div class="t mt" style="transform-origin:0 50%;transform:scaleX(0.9376);left:222px">Sources</div>
<div class="t mt" style="transform-origin:0 50%;transform:scaleX(1.0470);left:288px">Network</div>
<div class="t mt" style="transform-origin:0 50%;transform:scaleX(0.9921);left:359px">Performance</div>
<div class="t mt" style="transform-origin:0 50%;transform:scaleX(1.0187);left:453px">Memory</div>
<div class="t mt" style="transform-origin:0 50%;transform:scaleX(1.0301);left:522px">Application</div>
<div class="t mt" style="transform-origin:0 50%;transform:scaleX(0.9965);left:608px">Security</div>
<div class="t mt" style="transform-origin:0 50%;transform:scaleX(0.9972);left:685px">Lighthouse</div>
<div class="abs" style="left:69px;top:25px;width:75px;height:2px;background:#1a73e8;z-index:2"></div>
<div class="vsep" style="left:1286px;top:5px"></div>
<svg style="left:1298px;top:6.500px" width="14.200" height="14.200" viewBox="0 0 16 16"><path d="M13.900 8.800c0-.3.100-.5.100-.8s0-.5-.1-.8l1.700-1.300c.2-.1.200-.3.100-.5l-1.600-2.800c-.1-.2-.3-.2-.5-.2l-2 .8c-.4-.3-.9-.6-1.400-.8L10 .3C9.900.1 9.700 0 9.600 0H6.400c-.2 0-.4.100-.4.300l-.3 2.100c-.5.200-.9.500-1.400.8l-2-.8c-.2-.1-.4 0-.5.200L.2 5.400c-.1.200-.1.400.1.500L2 7.200c0 .3-.1.500-.1.800s0 .5.100.8L.3 10.100c-.2.100-.2.300-.1.500l1.600 2.800c.1.200.3.200.5.200l2-.8c.4.300.9.600 1.400.8l.3 2.100c0 .2.200.3.400.3h3.200c.2 0 .4-.1.400-.3l.3-2.100c.5-.2.900-.5 1.400-.8l2 .8c.2.100.4 0 .5-.2l1.600-2.800c.1-.2.100-.4-.1-.5zM8 10.800A2.800 2.800 0 1 1 8 5.200a2.800 2.800 0 0 1 0 5.600z" fill="#6b6b6b"/></svg>
<svg style="left:1331px;top:6px" width="5" height="15" viewBox="0 0 5 15"><circle cx="2.500" cy="2.300" r="1.700" fill="#6b6b6b"/><circle cx="2.500" cy="7.700" r="1.700" fill="#6b6b6b"/><circle cx="2.500" cy="13.100" r="1.700" fill="#6b6b6b"/></svg>
<svg style="left:1355.500px;top:8px" width="11" height="11" viewBox="0 0 11 11"><path d="M1 1l9 9M10 1l-9 9" stroke="#666" stroke-width="1.800"/></svg>
</div>
<div id="el">
<div class="abs" style="left:0;top:25px;width:987px;height:29px;background:#cfe8fc"></div>
<div class="abs" style="left:3px;top:279px;width:980px;height:15px;background:#e9eef8;border-radius:6px"></div>
<svg style="left:5px;top:31px" width="10" height="3" viewBox="0 0 10 3"><circle cx="1.300" cy="1.500" r="1.050" fill="#5f5f5f"/><circle cx="4.700" cy="1.500" r="1.050" fill="#5f5f5f"/><circle cx="8.100" cy="1.500" r="1.050" fill="#5f5f5f"/></svg>
<div class="r" style="left:98px;top:-4px"><span class="p">&lt;</span><span class="tg">label</span> <span class="an">class</span><span class="p">="</span><span class="av">pandetail</span><span class="p">"</span><span class="p">></span><span class="tx">Retrait Standard</span><span class="p">&lt;/</span><span class="tg">label</span><span class="p">&gt;</span></div>
<div class="r" style="left:98px;top:11px"><span class="p">&lt;</span><span class="tg">br</span><span class="p">></span></div>
<div class="r" style="left:98px;top:26px"><span class="p">&lt;</span><span class="tg">input</span> <span class="an">class</span><span class="p">="</span><span class="av">paiers</span><span class="p">"</span> <span class="an">type</span><span class="p">="</span><span class="av">radio</span><span class="p">"</span> <span class="an">name</span><span class="p">="</span><span class="av">choixmeth</span><span class="p">"</span> <span class="an">id</span><span class="p">="</span><span class="av">llivrer</span><span class="p">"</span> <span class="an">value</span><span class="p">="</span><span class="av">LIVRER</span><span class="p">"</span> <span class="an">onclick</span><span class="p">="</span><span class="av">eraseAdrLivr(false);getFraisLivraison(session</span></div>
<div class="r" style="left:98px;top:40px"><span class="av">Storage.getItem('sstotal'))</span><span class="p">"&gt;</span><span style="color:#737373"> == <i>$0</i></span></div>
<div class="r" style="left:98px;top:55px"><span class="p">&lt;</span><span class="tg">label</span> <span class="an">class</span><span class="p">="</span><span class="av">lblpaiers</span><span class="p">"</span> <span class="an">for</span><span class="p">="</span><span class="av">llivrer</span><span class="p">"</span><span class="p">></span><span class="tx">En Livraison </span><span class="p">&lt;/</span><span class="tg">label</span><span class="p">&gt;</span></div>
<div class="r" style="left:98px;top:70px"><span class="p">&lt;</span><span class="tg">br</span><span class="p">></span></div>
<div class="r" style="left:98px;top:85px"><span class="p">&lt;</span><span class="tg">div</span> <span class="an">class</span><span class="p">="</span><span class="av">spcpandetail</span><span class="p">"</span><span class="p">></span><span class="p">&lt;/</span><span class="tg">div</span><span class="p">&gt;</span></div>
<div class="r" style="left:98px;top:100px"><span class="p">&lt;</span><span class="tg">label</span> <span class="an">class</span><span class="p">="</span><span class="av">pandetail</span><span class="p">"</span><span class="p">></span><span class="tx">Livraison Standard</span><span class="p">&lt;/</span><span class="tg">label</span><span class="p">&gt;</span></div>
<div class="r" style="left:98px;top:115px"><span class="p">&lt;</span><span class="tg">br</span><span class="p">></span></div>
<div class="r" style="left:86px;top:130px"><span class="p">&lt;/</span><span class="tg">div</span><span class="p">&gt;</span></div>
<div class="r" style="left:74px;top:145px"><span class="p">&lt;/</span><span class="tg">div</span><span class="p">&gt;</span></div>
<div class="r" style="left:74px;top:160px"><span class="p">&lt;</span><span class="tg">div</span> <span class="an">id</span><span class="p">="</span><span class="av">adrlivr</span><span class="p">"</span><span class="p">></span><span class="tx">…</span><span class="p">&lt;/</span><span class="tg">div</span><span class="p">&gt;</span></div>
<div class="arr ar" style="left:64.5px;top:162.5px"></div>
<div class="r" style="left:62px;top:175px"><span class="p">&lt;/</span><span class="tg">div</span><span class="p">&gt;</span></div>
<div class="r" style="left:50px;top:190px"><span class="p">&lt;/</span><span class="tg">form</span><span class="p">&gt;</span></div>
<div class="r" style="left:50px;top:205px"><span class="p">&lt;</span><span class="tg">div</span> <span class="an">class</span><span class="p">="</span><span class="av">panneau</span><span class="p">"</span> <span class="an">id</span><span class="p">="</span><span class="av">paye</span><span class="p">"</span><span class="p">></span><span class="tx">…</span><span class="p">&lt;/</span><span class="tg">div</span><span class="p">&gt;</span></div>
<div class="arr ar" style="left:40.5px;top:207.5px"></div>
<div class="r" style="left:50px;top:220px"><span class="p">&lt;</span><span class="tg">div</span> <span class="an">class</span><span class="p">="</span><span class="av">panneau</span><span class="p">"</span> <span class="an">id</span><span class="p">="</span><span class="av">cgv</span><span class="p">"</span><span class="p">></span></div>
<div class="arr ad" style="left:39.5px;top:223.5px"></div>
<div class="r" style="left:62px;top:235px"><span class="p">&lt;</span><span class="tg">input</span> <span class="an">type</span><span class="p">="</span><span class="av">checkbox</span><span class="p">"</span> <span class="an">id</span><span class="p">="</span><span class="av">chkcgv</span><span class="p">"</span> <span class="an">name</span><span class="p">="</span><span class="av">okcgv</span><span class="p">"</span> <span class="an">value</span><span class="p">="</span><span class="av">valcgv</span><span class="p">"</span> <span class="an">onchange</span><span class="p">="</span><span class="av">memcgv()</span><span class="p">"</span><span class="p"> "&gt;</span></div>
<div class="r" style="left:62px;top:250px"><span class="p">&lt;</span><span class="tg">label</span> <span class="an">class</span><span class="p">="</span><span class="av">lblcgv</span><span class="p">"</span> <span class="an">for</span><span class="p">="</span><span class="av">valcgv</span><span class="p">"</span><span class="p">></span><span class="tx">…</span><span class="p">&lt;/</span><span class="tg">label</span><span class="p">&gt;</span></div>
<div class="arr ar" style="left:52.5px;top:252.5px"></div>
<div class="r" style="left:62px;top:265px"><span class="p">&lt;</span><span class="tg">br</span><span class="p">></span></div>
<div class="r" style="left:50px;top:280px"><span class="p">&lt;/</span><span class="tg">div</span><span class="p">&gt;</span></div>
<div class="r" style="left:50px;top:295px"><span class="p">&lt;</span><span class="tg">textarea</span> <span class="an">id</span><span class="p">="</span><span class="av">infosup</span><span class="p">"</span> <span class="an">name</span><span class="p">="</span><span class="av">infosup</span><span class="p">"</span> <span class="an">placeholder</span><span class="p">="</span><span class="av">Informations supplémentaires (date, heure, code interphone, ...)</span><span class="p">"</span><span class="p">></span><span class="p">&lt;/</span><span class="tg">textarea</span><span class="p">&gt;</span></div>
<div class="r" style="left:38px;top:310px"><span class="p">&lt;/</span><span class="tg">div</span><span class="p">&gt;</span></div>
<div class="r" style="left:38px;top:325px"><span class="p">&lt;</span><span class="tg">div</span> <span class="an">id</span><span class="p">="</span><span class="av">footer</span><span class="p">"</span><span class="p">></span><span class="tx">…</span><span class="p">&lt;/</span><span class="tg">div</span><span class="p">&gt;</span></div>
<div class="arr ar" style="left:28.5px;top:327.5px"></div>
<div class="r" style="left:38px;top:340px"><span class="p">&lt;</span><span class="tg">div</span> <span class="an">id</span><span class="p">="</span><span class="av">barre</span><span class="p">"</span> <span class="an">style</span><span class="p">="</span><span class="av">display: none; margin-top: 0px;</span><span class="p">"</span><span class="p">></span><span class="tx">…</span><span class="p">&lt;/</span><span class="tg">div</span><span class="p">&gt;</span></div>
<div class="arr ar" style="left:28.5px;top:342.5px"></div>
<div class="r" style="left:26px;top:355px"><span class="p">&lt;/</span><span class="tg">body</span><span class="p">&gt;</span></div>
<div class="r" style="left:14px;top:370px"><span class="p">&lt;/</span><span class="tg">html</span><span class="p">&gt;</span></div>
</div>
<div class="sb" style="left:986px;top:27px;width:15px;height:390px"></div>
<div class="th" style="left:988px;top:200px;width:11px;height:201px"></div>
<div class="arr" style="left:988.500px;top:32px;border-bottom:5px solid #505050;border-left:4.500px solid transparent;border-right:4.500px solid transparent"></div>
<div class="arr" style="left:988.500px;top:406px;border-top:5px solid #a0a0a0;border-left:4.500px solid transparent;border-right:4.500px solid transparent"></div>
<div id="st">
<div class="abs" style="left:0;top:0;width:376px;height:27px;background:#f3f3f3;border-bottom:1px solid #cbcbcb"></div>
<div class="t ui st" style="transform-origin:0 50%;transform:scaleX(0.9546);left:10.5px;top:8px">Styles</div>
<div class="t ui st" style="transform-origin:0 50%;transform:scaleX(0.9881);left:62.5px;top:8px">Computed</div>
<div class="t ui st" style="transform-origin:0 50%;transform:scaleX(0.9858);left:139.5px;top:8px">Layout</div>
<div class="t ui st" style="transform-origin:0 50%;transform:scaleX(0.9690);left:196.5px;top:8px">Event Listeners</div>
<svg style="left:298.500px;top:9px" width="10" height="9" viewBox="0 0 10 9"><path d="M.8.800l3.700 3.700L.8 8.200M5 .8l3.700 3.700L5 8.200" fill="none" stroke="#5a5a5a" stroke-width="1.200"/></svg>
<div class="abs" style="left:0;top:25px;width:53px;height:2px;background:#1a73e8;z-index:2"></div>
<div class="abs" style="left:0;top:27px;width:376px;height:27px;background:#f3f3f3"></div>
<div class="abs" style="left:4px;top:30px;width:221px;height:20px;background:#fff"></div>
<div class="t ui" style="left:8px;top:35px;color:#8a8a8a">Filter</div>
<div class="s" style="left:236px;top:33px;font-weight:bold;color:#555">:hov</div>
<div class="s" style="left:272px;top:33px;font-weight:bold;color:#555">.cls</div>
<svg style="left:312px;top:35px" width="16" height="16" viewBox="0 0 16 16"><path d="M5 0v10M0 5h10" stroke="#6b6b6b" stroke-width="1.600"/><path d="M16 9.700v4.800h-4.800z" fill="#6b6b6b"/></svg>
<svg style="left:337px;top:34px" width="15" height="12.800" viewBox="0 0 16 14"><rect x=".6" y=".6" width="14.800" height="12.800" fill="none" stroke="#555" stroke-width="1.200"/><path d="M11 .6v12.800" stroke="#555" stroke-width="1.200"/><path d="M8.500 3.500v7L3.500 7z" fill="#555"/></svg>
<div class="abs" style="left:0;top:293px;width:362px;height:106px;background:#fafafa"></div>
<div class="s" style="left:6.0px;top:56px;"><span class="br">}</span></div>
<div class="sepl" style="top:72px"></div>
<div class="s" style="left:6.0px;top:75px;">.paiers <span class="br">{</span></div>
<div class="s lk" style="left:226.6px;top:75px">style.css?v=1.31:485</div>
<div class="s" style="left:23.0px;top:91px;"><span class="pn">width</span>: 13px;</div>
<div class="s" style="left:23.0px;top:105px;"><span class="pn">margin</span>:  0;</div>
<div class="arr" style="left:71.8px;top:108px;border-left:6.200px solid #5a5a5a;border-top:3.800px solid transparent;border-bottom:3.800px solid transparent"></div>
<div class="s" style="left:23.0px;top:119px;"><span class="pn">margin-top</span>: 18px;</div>
<div class="s" style="left:23.0px;top:133px;"><span class="pn">filter</span>: contrast(100%) saturate(0);</div>
<div class="s" style="left:6.0px;top:147px;"><span class="br">}</span></div>
<div class="sepl" style="top:164px"></div>
<div class="s" style="left:6.0px;top:167px;">input <span class="br">{</span></div>
<div class="s lk" style="left:226.6px;top:167px">style.css?v=1.31:300</div>
<div class="s" style="left:23.0px;top:183px;"><span class="pn">display</span>: inline-block;</div>
<div class="s" style="left:23.0px;top:197px;"><span class="pn">font-size</span>: 100%;</div>
<div class="s" style="left:23.0px;top:211px;text-decoration:line-through;text-decoration-color:#222;"><span class="pn">width</span>: 40%;</div>
<div class="abs" style="left:6px;top:211px;width:12px;height:12px;border:1px solid #767676;border-radius:2px;background:#fff"></div>
<div class="s" style="left:6.0px;top:225px;"><span class="br">}</span></div>
<div class="sepl" style="top:242px"></div>
<div class="s" style="left:6.0px;top:245px;">* <span class="br">{</span></div>
<div class="s lk" style="left:239.8px;top:245px">style.css?v=1.31:2</div>
<div class="s" style="left:23.0px;top:261px;"><span class="pn">touch-action</span>: manipulation;</div>
<div class="s" style="left:6.0px;top:275px;"><span class="br">}</span></div>
<div class="sepl" style="top:292px"></div>
<div class="s" style="left:6.5px;top:295px;font-style:italic">input[type="radio" i] <span class="br">{</span></div>
<div class="s" style="left:220.5px;top:295px;font-style:italic;color:#808080">user agent stylesheet</div>
<div class="s" style="left:24.0px;top:311px;font-style:italic;"><span class="pn">background-color</span>: initial;</div>
<div class="s" style="left:24.0px;top:325px;font-style:italic;"><span class="pn">cursor</span>: default;</div>
<div class="s" style="left:24.0px;top:339px;font-style:italic;"><span class="pn">appearance</span>: auto;</div>
<div class="s" style="left:24.0px;top:353px;font-style:italic;"><span class="pn">box-sizing</span>: border-box;</div>
<div class="s" style="left:24.0px;top:367px;font-style:italic;text-decoration:line-through;text-decoration-color:#222;"><span class="pn">margin</span>:  3px 3px 0px 5px;</div>
<div class="arr" style="left:72.8px;top:370px;border-left:6.200px solid #5a5a5a;border-top:3.800px solid transparent;border-bottom:3.800px solid transparent"></div>
<div class="s" style="left:24.0px;top:381px;font-style:italic;"><span class="pn">padding</span>:  initial;</div>
<div class="arr" style="left:79.5px;top:384px;border-left:6.200px solid #5a5a5a;border-top:3.800px solid transparent;border-bottom:3.800px solid transparent"></div>
<div class="s" style="left:24.0px;top:395px;font-style:italic;"><span class="pn">border</span>:  initial;</div>
<div class="arr" style="left:72.8px;top:398px;border-left:6.200px solid #5a5a5a;border-top:3.800px solid transparent;border-bottom:3.800px solid transparent"></div>
<div class="sb" style="left:0;top:398px;width:362px;height:16px"></div>
<div class="abs" style="left:362px;top:398px;width:14px;height:16px;background:#dcdcdc"></div>
<div class="arr" style="left:5px;top:401.500px;border-right:5px solid #a0a0a0;border-top:4.500px solid transparent;border-bottom:4.500px solid transparent"></div>
<div class="arr" style="left:351px;top:401.500px;border-left:5px solid #a0a0a0;border-top:4.500px solid transparent;border-bottom:4.500px solid transparent"></div>
<div class="sb" style="left:362px;top:27px;width:14px;height:371px"></div>
<div class="th" style="left:363.500px;top:46px;width:11px;height:97px"></div>
<div class="arr" style="left:364.500px;top:33px;border-bottom:5px solid #505050;border-left:4.500px solid transparent;border-right:4.500px solid transparent"></div>
<div class="arr" style="left:364.500px;top:388px;border-top:5px solid #505050;border-left:4.500px solid transparent;border-right:4.500px solid transparent"></div>
</div>
<div class="abs" style="left:1001px;top:27px;width:1px;height:414px;background:#cbcbcb"></div>
<div class="abs" style="left:0;top:416px;width:1001px;height:1px;background:#cbcbcb"></div>
<div class="abs" style="left:447px;top:417px;width:118px;height:23px;background:#f3f3f3"></div>
<div class="t ui bc" style="transform-origin:0 50%;transform:scaleX(1.0667);left:7.2px;top:423px"><span style="color:#881280">html</span></div>
<div class="t ui bc" style="transform-origin:0 50%;transform:scaleX(1.0070);left:46.2px;top:423px"><span style="color:#881280">body</span></div>
<div class="t ui bc" style="transform-origin:0 50%;transform:scaleX(1.0054);left:87.4px;top:423px"><span style="color:#881280">div</span><span style="color:#333">#main</span></div>
<div class="t ui bc" style="transform-origin:0 50%;transform:scaleX(1.0600);left:152.0px;top:423px"><span style="color:#881280">form</span></div>
<div class="t ui bc" style="transform-origin:0 50%;transform:scaleX(1.0528);left:192.8px;top:423px"><span style="color:#881280">div</span><span style="color:#333">#grpinfo</span></div>
<div class="t ui bc" style="transform-origin:0 50%;transform:scaleX(0.9956);left:271.5px;top:423px"><span style="color:#881280">div</span><span style="color:#333">#met</span><span style="color:#994500">.panneau</span></div>
<div class="t ui bc" style="transform-origin:0 50%;transform:scaleX(1.0319);left:381.2px;top:423px"><span style="color:#881280">div</span><span style="color:#333">#model</span></div>
<div class="t ui bc" style="transform-origin:0 50%;transform:scaleX(1.0281);left:453.8px;top:423px"><span style="color:#881280">input</span><span style="color:#333">#llivrer</span><span style="color:#994500">.paiers</span></div>
<div class="abs" style="left:0;top:440px;width:1377px;height:1px;background:#cbcbcb"></div>
<div class="abs" style="left:0;top:441px;width:1377px;height:26px;background:#f3f3f3"></div>
<div class="abs" style="left:0;top:467px;width:1377px;height:1px;background:#cbcbcb"></div>
<svg style="left:14px;top:447px" width="4" height="15" viewBox="0 0 4 15"><circle cx="2" cy="2.200" r="1.400" fill="#5a5a5a"/><circle cx="2" cy="7.500" r="1.400" fill="#5a5a5a"/><circle cx="2" cy="12.800" r="1.400" fill="#5a5a5a"/></svg>
<div class="t ui dr" style="transform-origin:0 50%;transform:scaleX(0.9482);left:37.5px;top:449px">Console</div>
<div class="t ui dr" style="transform-origin:0 50%;transform:scaleX(0.9789);left:100.5px;top:449px">What's New</div>
<div class="t ui dr" style="transform-origin:0 50%;transform:scaleX(0.9076);left:194.2px;top:449px">Issues</div>
<div class="abs" style="left:28px;top:466px;width:63px;height:2px;background:#1a73e8;z-index:2"></div>
<svg style="left:1355.500px;top:449px" width="11" height="11" viewBox="0 0 11 11"><path d="M1 1l9 9M10 1l-9 9" stroke="#666" stroke-width="1.800"/></svg>
<div class="abs" style="left:0;top:468px;width:1377px;height:26px;background:#f3f3f3"></div>
<div class="abs" style="left:0;top:494px;width:1377px;height:1px;background:#cbcbcb"></div>
<svg style="left:8px;top:474px" width="15" height="14" viewBox="0 0 15 14"><rect x=".6" y=".6" width="13.800" height="12.800" fill="none" stroke="#555" stroke-width="1.200"/><path d="M4 .6v12.800" stroke="#555" stroke-width="1.200"/><path d="M6.500 3.500v7l5-3.500z" fill="#555"/></svg>
<svg style="left:37px;top:474px" width="14" height="14" viewBox="0 0 14 14"><circle cx="7" cy="7" r="5.800" fill="none" stroke="#555" stroke-width="1.600"/><path d="M2.900 2.900l8.200 8.200" stroke="#555" stroke-width="1.600"/></svg>
<div class="vsep" style="left:62px;top:473px"></div>
<div class="t ui" style="left:71.700px;top:476px">top</div>
<div class="arr" style="left:193px;top:478px;border-top:7px solid #444;border-left:3.700px solid transparent;border-right:3.700px solid transparent"></div>
<div class="vsep" style="left:209px;top:473px"></div>
<svg style="left:219px;top:476px" width="17" height="12" viewBox="0 0 17 12"><path d="M8.500.5C4.800.5 1.700 2.700.5 6c1.200 3.300 4.300 5.500 8 5.500s6.800-2.200 8-5.500c-1.200-3.300-4.300-5.500-8-5.500z" fill="#555"/><circle cx="8.500" cy="6" r="3.400" fill="#f3f3f3"/><circle cx="8.500" cy="6" r="1.900" fill="#555"/></svg>
<div class="vsep" style="left:246px;top:473px"></div>
<div class="abs" style="left:253px;top:471px;width:294px;height:21px;background:#fff;border:1px solid #e4e4e4"></div>
<div class="t ui" style="left:258px;top:476px;color:#8a8a8a">Filter</div>
<div class="t ui" id="deflev" style="transform-origin:0 50%;transform:scaleX(1.0060);left:554.800px;top:476px">Default levels</div>
<div class="arr" style="left:635px;top:478px;border-top:7px solid #444;border-left:3.700px solid transparent;border-right:3.700px solid transparent"></div>
<div class="vsep" style="left:1342px;top:473px"></div>
<svg style="left:1354px;top:474px" width="14" height="14" viewBox="0 0 16 16"><path d="M13.900 8.800c0-.3.100-.5.100-.8s0-.5-.1-.8l1.700-1.300c.2-.1.200-.3.100-.5l-1.600-2.800c-.1-.2-.3-.2-.5-.2l-2 .8c-.4-.3-.9-.6-1.400-.8L10 .3C9.900.1 9.700 0 9.600 0H6.400c-.2 0-.4.100-.4.300l-.3 2.100c-.5.200-.9.500-1.400.8l-2-.8c-.2-.1-.4 0-.5.200L.2 5.400c-.1.200-.1.400.1.500L2 7.200c0 .3-.1.500-.1.800s0 .5.100.8L.3 10.100c-.2.100-.2.300-.1.500l1.600 2.800c.1.200.3.200.5.200l2-.8c.4.300.9.600 1.400.8l.3 2.100c0 .2.200.3.400.3h3.200c.2 0 .4-.1.400-.3l.3-2.100c.5-.2.900-.5 1.400-.8l2 .8c.2.100.4 0 .5-.2l1.600-2.800c.1-.2.100-.4-.1-.5zM8 10.800A2.800 2.800 0 1 1 8 5.200a2.800 2.800 0 0 1 0 5.600z" fill="#6b6b6b"/></svg>
<svg style="left:9.500px;top:501px" width="6" height="8" viewBox="0 0 6 8"><path d="M1 .8l3.300 3.200-3.300 3.200" fill="none" stroke="#367cf1" stroke-width="1.400"/></svg>
</div>
<!-- ======= TASKBAR ======= -->
<div id="taskbar">
<svg style="left:5px;top:5px" width="32" height="32" viewBox="0 0 32 32"><circle cx="16" cy="16" r="14.600" fill="none" stroke="#fff" stroke-width="2.300"/><path d="M9.500 9v9.500c0 2.300 1.500 3.800 3.800 3.800h5.900c2.300 0 3.800-1.500 3.800-3.800v-4.200c0-1.700-1.200-2.900-2.800-2.900-1 0-1.800.4-2.300 1.100-.5-.7-1.300-1.100-2.300-1.100-1.600 0-2.800 1.200-2.800 2.900v3.700" fill="none" stroke="#fff" stroke-width="2.300" stroke-linecap="butt" stroke-linejoin="round"/><path d="M17.900 18v-3.700" stroke="#fff" stroke-width="2.300"/></svg>
<div class="abs" style="left:51px;top:9px;width:30px;height:24px;background:#87b158"></div><div class="abs" style="left:51px;top:9px;width:30px;height:5px;background:#6c8f45"></div><div class="abs" style="left:55px;top:11px;width:2px;height:2px;background:#fff"></div>
<svg style="left:100px;top:6px" width="28" height="28" viewBox="0 0 28 28"><defs><linearGradient id="ffg" x1="0" y1="0" x2="0" y2="1"><stop offset="0" stop-color="#fba551"/><stop offset="1" stop-color="#f07c2d"/></linearGradient></defs><rect width="28" height="28" rx="5.500" fill="url(#ffg)"/><circle cx="14.300" cy="15.300" r="9.900" fill="#fff"/><circle cx="16.300" cy="13.200" r="5.700" fill="#f48b38"/><path d="M10.200 7.500l2.200 2.300 3.300.4-1.400 1.600 1.500.5-1.800 1.800c-.9.600-2 .5-2.900 1 .5 1 1.700 1.500 3 1.300 1.300-.2 2.300-.8 3-1.700-.3 1.600-1.700 2.800-3.500 3-2.200.2-4-1-4.700-2.800z" fill="#fff"/><path d="M18.700 4.900c3.400 1.500 5.700 4.900 5.700 8.800 0-2.800-1.400-5.300-3.500-6.800 0-.8-.3-1.500-.9-2z" fill="#fbb26a"/></svg>
<svg style="left:145px;top:5.5px" width="30" height="29" viewBox="0 0 29 28"><rect x=".6" y=".6" width="27.800" height="26.800" rx="5" fill="#262626" stroke="#141414" stroke-width="1.200"/><text x="3.800" y="10" font-family="Liberation Mono, monospace" font-size="9" font-weight="bold" fill="#f4f4f4">$</text><rect x="9.800" y="9.800" width="6.500" height="1.400" fill="#f4f4f4"/></svg>
<svg style="left:191px;top:8px" width="30" height="25" viewBox="0 0 30 25"><path d="M4 3.500C4 2 5 1 6.500 1h20.500v5H4z" fill="#fff"/><path d="M0 6.500C0 5 1 4 2.500 4h25C29 4 30 5 30 6.500v16c0 1.500-1 2.500-2.500 2.500h-25C1 25 0 24 0 22.500z" fill="#87b158"/></svg>
<div class="abs" style="left:186px;top:39px;width:40px;height:2px;background:#87b158"></div>
<div class="abs" style="left:232px;top:0;width:40px;height:41px;background:#6b6b6b"></div>
<svg style="left:237.500px;top:5.5px" width="29" height="29" viewBox="0 0 29 29"><defs><clipPath id="crc"><rect width="29" height="29" rx="5.500"/></clipPath><linearGradient id="crg" x1="0" y1="0" x2="0" y2="1"><stop offset="0" stop-color="#8fb9e6"/><stop offset="1" stop-color="#3f7fc8"/></linearGradient></defs><g clip-path="url(#crc)"><rect width="29" height="29" fill="#79aee2"/><path d="M0 0h29v6.500H17L8.500 14 0 5z" fill="#5b8bc0"/><path d="M29 6.500v22.500H15l5.500-10 1-5-3-7.500z" fill="#c3daf0"/><circle cx="14.300" cy="14.600" r="8.100" fill="#fff"/><circle cx="14.300" cy="14.600" r="7" fill="url(#crg)"/></g><rect x=".4" y=".4" width="28.200" height="28.200" rx="5.200" fill="none" stroke="#2f4a68" stroke-width=".8" opacity=".7"/></svg>
<div class="abs" style="left:232px;top:39px;width:40px;height:2px;background:#87b158"></div>
<svg style="left:283.700px;top:5.5px" width="28.600" height="29" viewBox="0 0 28.600 29"><defs><clipPath id="bac"><rect width="28.600" height="29" rx="5.500"/></clipPath><linearGradient id="bag" x1="0" y1="0" x2="0" y2="1"><stop offset="0" stop-color="#3273c5"/><stop offset="1" stop-color="#275a9f"/></linearGradient><linearGradient id="eyg" x1="0" y1="0" x2="0" y2="1"><stop offset="0" stop-color="#fff"/><stop offset="1" stop-color="#c9c9c9"/></linearGradient></defs><g clip-path="url(#bac)"><rect width="28.600" height="29" fill="url(#bag)"/><path d="M12.500 0h11.500c1.500 6 1.500 13-1 17.500-2 2.500-5.500 2.500-7.500 0C12.500 13 11.500 6 12.500 0z" fill="#5c95d8" opacity=".55"/><path d="M0 22c6 2.500 13 2 18.500-.5-2 4-4.500 6-7.500 7.500H0z" fill="#4a84cc" opacity=".6"/><ellipse cx="17.700" cy="11.600" rx="6.100" ry="5.600" fill="url(#eyg)"/><circle cx="20.200" cy="10" r="1.700" fill="#0a0a0a"/></g></svg>
<div class="abs" style="left:278px;top:39px;width:40px;height:2px;background:#87b158"></div>
<svg style="left:1580px;top:12px" width="11" height="17" viewBox="0 0 11 17"><rect width="11" height="17" rx="5.500" fill="#f0f0f0"/><path d="M3 5.500l5 5.500-2.500 2.500v-10L8 6l-5 5.500" fill="none" stroke="#2b2b2b" stroke-width="1.100"/></svg>
<svg style="left:1601px;top:13px" width="16" height="16" viewBox="0 0 16 16"><path d="M8 .8l7 2.200c0 6-2.500 10-7 12.300C3.500 13 1 9 1 3z" fill="none" stroke="#e8e8e8" stroke-width="1.500"/><path d="M8 3.300l4.700 1.500c0 4-1.700 6.700-4.700 8.400-3-1.700-4.700-4.400-4.700-8.400z" fill="#e8e8e8"/></svg>
<svg style="left:1625px;top:15px" width="17" height="12" viewBox="0 0 17 12"><path d="M6 0h11v12H6c-3 0-6-3-6-5.500S3 0 6 0z" fill="#d0d0d0"/><path d="M6.500 2.500C4 2.500 2 4.500 1.500 6c.8 1.500 2.500 3.500 5 3.500 2 0 3.500-1.500 4-3-1-1.200-2-2-3.500-2s-2.300.8-2.800 1.700c.5.800 1.300 1.500 2.300 1.500" fill="none" stroke="#2b2b2b" stroke-width="1"/></svg>
<svg style="left:1653px;top:13px" width="14" height="16" viewBox="0 0 14 16"><rect x=".8" y=".8" width="12.400" height="14.400" rx="1.500" fill="none" stroke="#f0f0f0" stroke-width="1.600"/><path d="M7 5l3 3.500H4zM4 10h6v1.500H4z" fill="#f0f0f0"/></svg>
<svg style="left:1677px;top:14px" width="18" height="14" viewBox="0 0 18 14"><path d="M1 4.500a11.500 11.500 0 0 1 16 0" fill="none" stroke="#7b7b7b" stroke-width="2"/><path d="M3.700 7.300a7.600 7.600 0 0 1 10.600 0" fill="none" stroke="#7b7b7b" stroke-width="2"/><path d="M6.300 10a3.900 3.900 0 0 1 5.400 0" fill="none" stroke="#e8e8e8" stroke-width="1.800"/><circle cx="9" cy="12.300" r="1.300" fill="#f0f0f0"/></svg>
<svg style="left:1703px;top:13px" width="17" height="15" viewBox="0 0 17 15"><path d="M0 5h3l4-4v13l-4-4H0z" fill="#f0f0f0"/><path d="M9 4.500a4 4 0 0 1 0 6M11 2.500a7 7 0 0 1 0 10M13.200.8a9.500 9.500 0 0 1 0 13.400" fill="none" stroke="#f0f0f0" stroke-width="1.400"/></svg>
<svg style="left:1731px;top:12px" width="16" height="17" viewBox="0 0 16 17"><path d="M4 1h5v1.500h2.500v13H1.500v-13H4z" fill="none" stroke="#f0f0f0" stroke-width="1.500"/><path d="M3.500 6h5M3.500 9h4M3.500 12h3" stroke="#f0f0f0" stroke-width="1.500"/><path d="M12.500 8.500L9 13.500h3l-1 3.500 4.500-5.500h-3z" fill="#9a9a9a"/></svg>
<div class="t" id="clock" style="left:1755.500px;top:14px;font-size:13.500px;font-weight:bold;color:#fff;line-height:15px">Jeudi 11 février, 11:44:34</div>
</div>
</body>
</html>
